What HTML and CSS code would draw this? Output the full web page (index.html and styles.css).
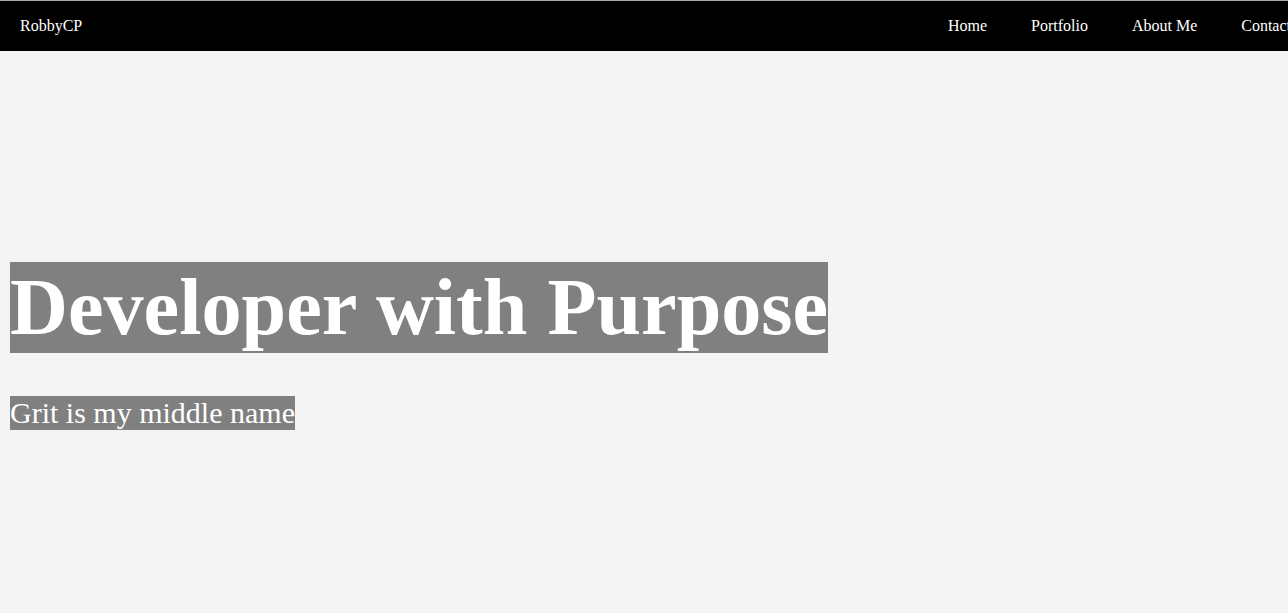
FILE: index.html
```html
<!DOCTYPE html>
<html lang="en">
<head>
<meta charset="utf-8">
<title>RobbyCP</title>
<link rel="stylesheet" href="styles.css">
</head>
<body>
<header class="topbar">
  <a class="brand" href="#">RobbyCP</a>
  <nav>
    <ul class="nav-list">
      <li><a href="#">Home</a></li>
      <li><a href="#">Portfolio</a></li>
      <li><a href="#">About Me</a></li>
      <li><a href="#">Contact</a></li>
    </ul>
  </nav>
</header>
<main class="hero">
  <h1 class="hero-title">Developer with Purpose</h1>
  <p class="hero-sub">Grit is my middle name</p>
</main>
</body>
</html>
```

FILE: styles.css
```css
html, body {
  margin: 0;
  padding: 0;
  overflow: hidden;
}
body {
  background: #f4f4f4;
  font-family: "Liberation Serif", "Times New Roman", serif;
  border-top: 1px solid #a8a8a8;
  height: 612px;
}
.topbar {
  background: #000;
  height: 50px;
  display: flex;
  align-items: center;
  justify-content: space-between;
  padding: 0 0 0 20px;
}
.brand {
  color: #fff;
  text-decoration: none;
  font-size: 16px;
}
.nav-list {
  list-style: none;
  display: flex;
  margin: 0 -45px 0 0;
  padding: 0 20px 0 0;
}
.nav-list li {
  padding: 0 22px;
}
.nav-list a {
  color: #fff;
  text-decoration: none;
  font-size: 16px;
}
.hero {
  padding: 211px 10px 0 10px;
  display: flex;
  flex-direction: column;
  align-items: flex-start;
}
.hero-title {
  margin: 0;
  background: #808080;
  color: #fff;
  font-size: 80.2px;
  font-weight: bold;
  line-height: 91px;
}
.hero-sub {
  margin: 43px 0 0 0;
  background: #808080;
  color: #fff;
  font-size: 30px;
  line-height: 34px;
}
```
